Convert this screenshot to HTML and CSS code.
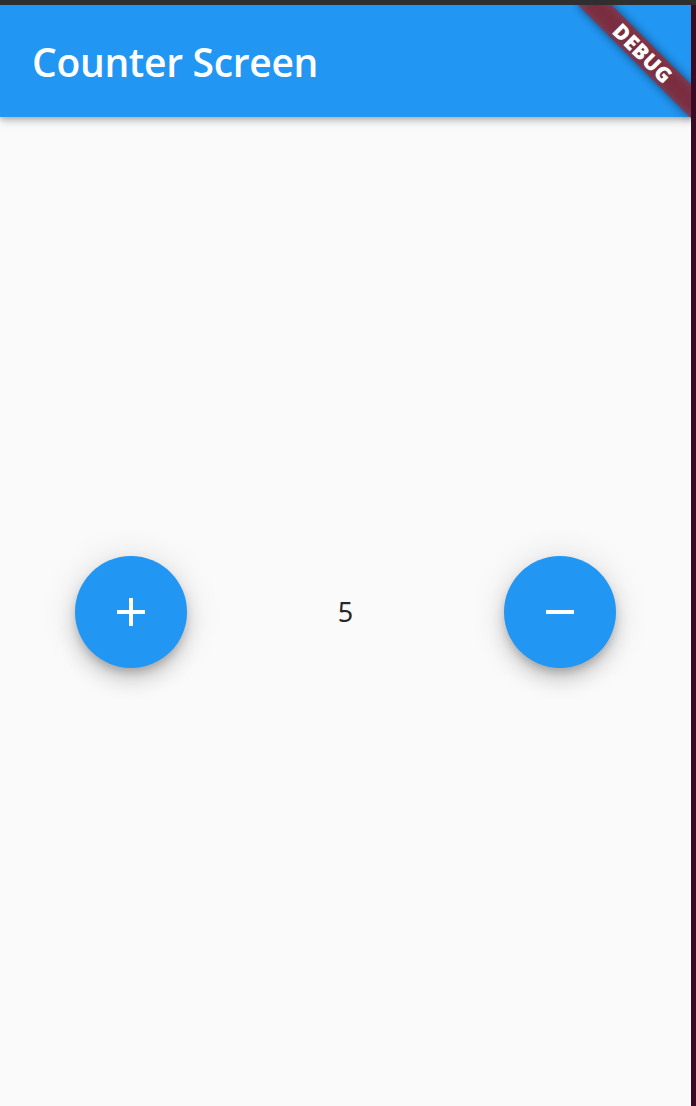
FILE: index.html
```html
<!DOCTYPE html>
<html lang="en">
<head>
<meta charset="utf-8">
<title>Counter Screen</title>
<link rel="stylesheet" href="styles.css">
</head>
<body>
<div class="chrome-top"></div>
<div class="window">
  <div class="app">
    <header class="appbar">
      <h1 class="title">Counter Screen</h1>
    </header>
    <main class="content">
      <button class="fab" aria-label="Increment">
        <svg viewBox="0 0 24 24" width="48" height="48"><path d="M19 13h-6v6h-2v-6H5v-2h6V5h2v6h6v2z" fill="#fff"/></svg>
      </button>
      <span class="count">5</span>
      <button class="fab" aria-label="Decrement">
        <svg viewBox="0 0 24 24" width="48" height="48"><path d="M19 13H5v-2h14v2z" fill="#fff"/></svg>
      </button>
    </main>
    <div class="banner-anchor">
      <div class="banner"><span>DEBUG</span></div>
    </div>
  </div>
  <div class="edge"></div>
</div>
</body>
</html>
```
FILE: styles.css
```css
html, body {
  margin: 0;
  padding: 0;
  width: 696px;
  height: 1106px;
  overflow: hidden;
  background: #2e2e2e;
}
.chrome-top {
  height: 5px;
  background: #2f2f2f;
}
.window {
  display: flex;
  height: 1101px;
}
.app {
  position: relative;
  width: 691px;
  height: 1101px;
  overflow: hidden;
  background: #fafafa;
  display: flex;
  flex-direction: column;
}
.edge {
  width: 5px;
  background: #3b0a24;
}
.appbar {
  position: relative;
  z-index: 1;
  height: 112px;
  flex: none;
  background: #2196f3;
  display: flex;
  align-items: center;
  padding-left: 32px;
  box-shadow: 0 4px 8px rgba(0,0,0,0.22), 0 2px 4px rgba(0,0,0,0.12);
}
.title {
  margin: 0;
  color: #fff;
  font-family: "Open Sans", "Noto Sans", sans-serif;
  font-weight: 600;
  font-size: 39px;
  letter-spacing: -0.3px;
  line-height: 1;
}
.content {
  flex: 1;
  display: flex;
  align-items: center;
  justify-content: space-around;
}
.fab {
  width: 112px;
  height: 112px;
  border: none;
  border-radius: 50%;
  background: #2196f3;
  padding: 0;
  display: flex;
  align-items: center;
  justify-content: center;
  box-shadow: 0 12px 20px rgba(0,0,0,0.14), 0 2px 36px rgba(0,0,0,0.12), 0 6px 10px -2px rgba(0,0,0,0.2);
}
.count {
  font-family: "Noto Sans", "Open Sans", sans-serif;
  font-size: 27px;
  color: rgba(0,0,0,0.87);
  line-height: 1;
}
.banner-anchor {
  position: absolute;
  top: 0;
  right: 0;
  width: 0;
  height: 0;
  z-index: 2;
  transform: rotate(45deg);
  transform-origin: 0 0;
}
.banner {
  position: absolute;
  left: -80px;
  top: 56px;
  width: 160px;
  height: 24px;
  display: flex;
  align-items: center;
  justify-content: center;
}
.banner::before {
  content: "";
  position: absolute;
  inset: 0;
  background: rgba(0,0,0,0.5);
  filter: blur(5px);
}
.banner::after {
  content: "";
  position: absolute;
  inset: 0;
  background: rgba(183,28,28,0.63);
}
.banner span {
  position: relative;
  z-index: 1;
  color: #fff;
  font-family: "Open Sans", "Noto Sans", sans-serif;
  font-weight: 800;
  font-size: 21px;
  line-height: 1;
  letter-spacing: 0.3px;
}
```
